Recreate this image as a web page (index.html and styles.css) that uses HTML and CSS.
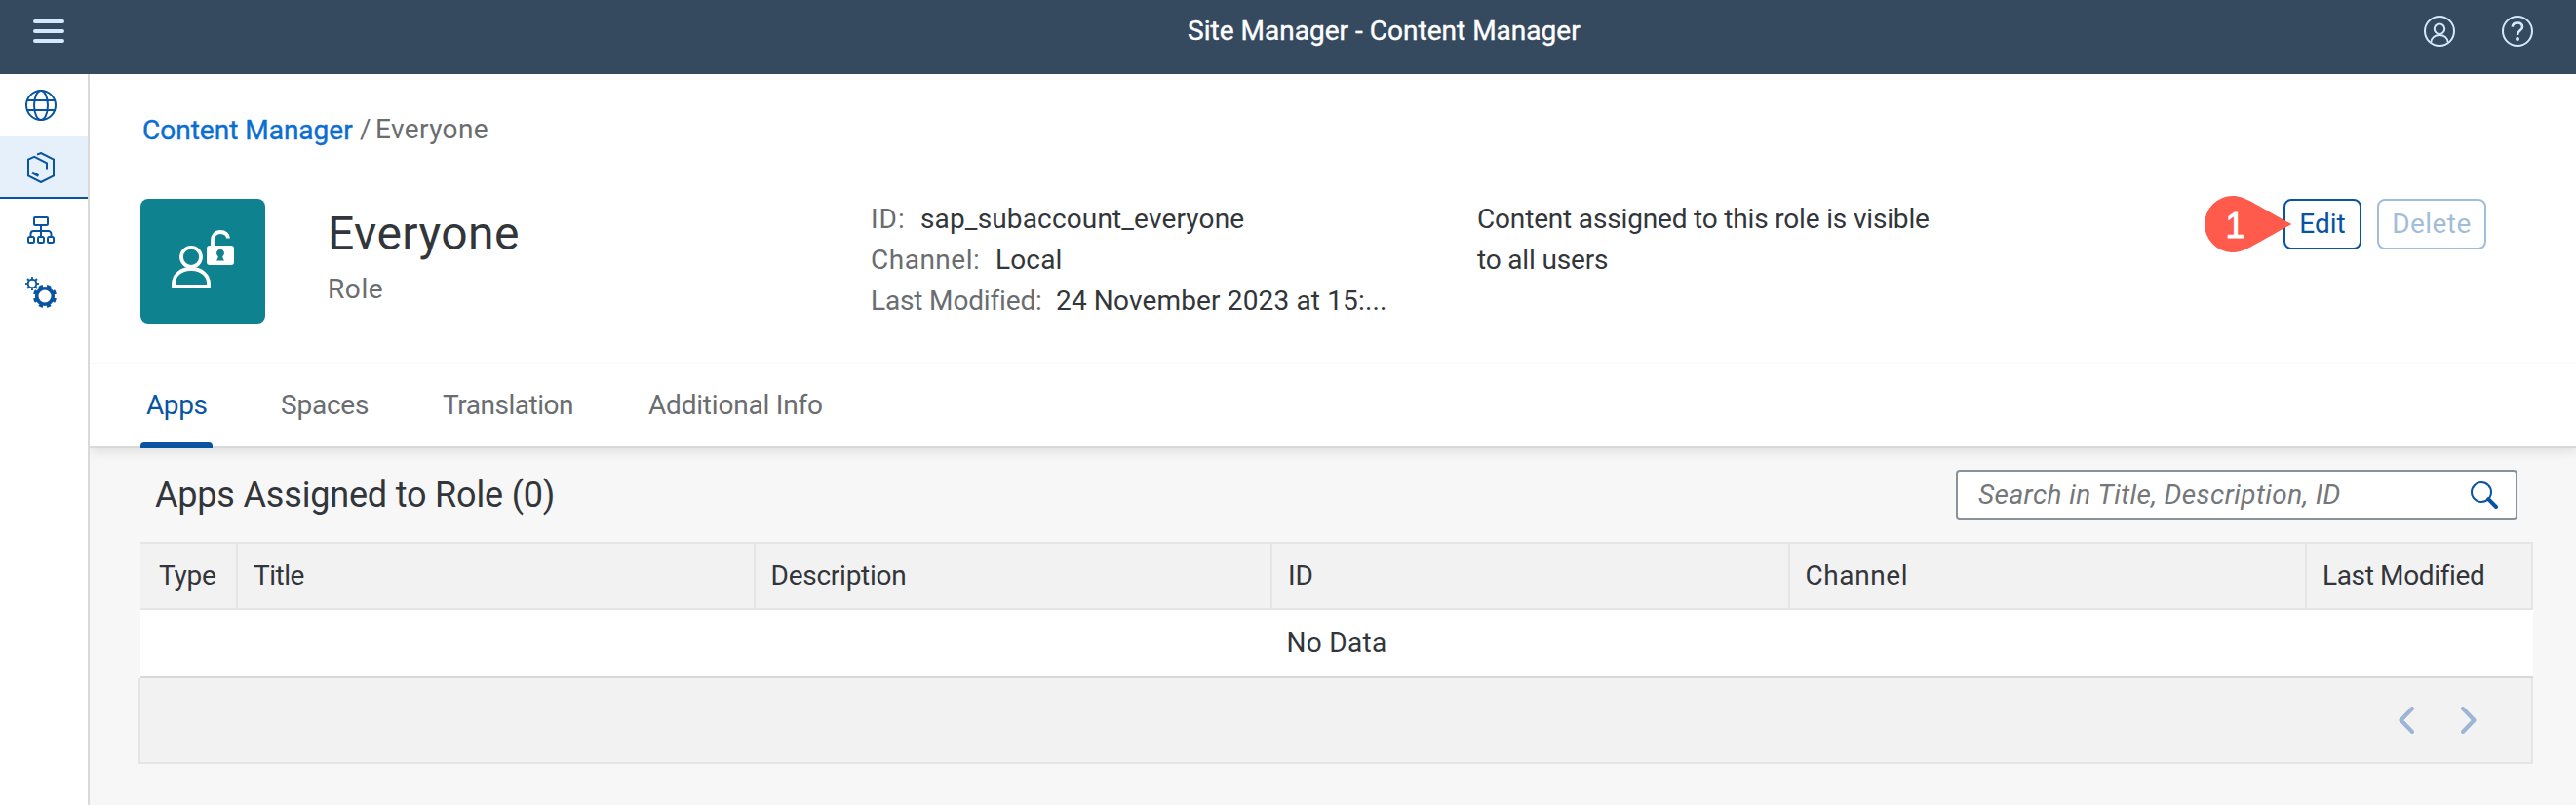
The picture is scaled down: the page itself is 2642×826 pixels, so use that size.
FILE: index.html
```
<!DOCTYPE html>
<html lang="en">
<head>
<meta charset="utf-8">
<title>Site Manager - Content Manager</title>
<link rel="stylesheet" href="styles.css">
</head>
<body>
<header class="shell">
  <svg class="shell-menu" width="32" height="24" viewBox="0 0 32 24"><path d="M2 2h28M2 12h28M2 22h28" fill="none" stroke="#d1e8ff" stroke-width="4" stroke-linecap="round"/></svg>
  <h1 class="shell-title">Site Manager - Content Manager</h1>
  <div class="shell-actions">
    <svg width="32" height="32" viewBox="0 0 32 32" fill="none" stroke="#d1e8ff" stroke-width="2"><circle cx="16" cy="16" r="15"/><circle cx="16" cy="13.7" r="5.2"/><path d="M7.3 27.5c.4-4.600 4-7.500 8.700-7.500s8.300 2.900 8.700 7.500"/></svg>
    <svg width="32" height="32" viewBox="0 0 32 32" fill="none" stroke="#d1e8ff" stroke-width="2"><circle cx="16" cy="16" r="15"/><path d="M10.800 11.600C11 8.800 13.200 7.500 16 7.500c3 0 5 1.600 5 4.200 0 3.800-5 3.600-5 8.300" stroke-width="2.600"/><circle cx="16" cy="24" r="2" fill="#d1e8ff" stroke="none"/></svg>
  </div>
</header>
<div class="app">
  <nav class="side">
    <a class="side-item"><svg width="32" height="32" viewBox="0 0 32 32" fill="none" stroke="#0854a0" stroke-width="2"><circle cx="16" cy="16" r="15"/><ellipse cx="16" cy="16" rx="7" ry="15"/><path d="M2 11h28M2 21h28"/></svg></a>
    <a class="side-item side-item-active"><svg width="32" height="32" viewBox="0 0 32 32" fill="none" stroke="#0854a0" stroke-width="2"><path d="M12 2.600L16 1l13 6.700v16.600L16 31 3 24.300V7.700L9.200 4.800 22 11.300v6.200"/><path d="M7 21l6.500 3.500" stroke-width="2.600"/></svg></a>
    <a class="side-item"><svg width="32" height="32" viewBox="0 0 32 32" fill="none" stroke="#0854a0" stroke-width="2"><rect x="9" y="3" width="14" height="8" rx="1"/><path d="M16 11v12M5.500 23v-3a3 3 0 0 1 3-3h15a3 3 0 0 1 3 3v3"/><rect x="3" y="23" width="6" height="6" rx="1.500"/><rect x="13" y="23" width="6" height="6" rx="1.500"/><rect x="23" y="23" width="6" height="6" rx="1.500"/></svg></a>
    <a class="side-item"><svg width="32" height="32" viewBox="0 0 32 32" fill="none" stroke="#0854a0"><circle cx="7" cy="7" r="4.300" stroke-width="1.900"/><circle cx="7" cy="7" r="5.900" stroke-width="2.200" pathLength="16" stroke-dasharray=".8 1.200" stroke-dashoffset=".4"/><circle cx="20" cy="20" r="8.300" stroke-width="3.600"/><circle cx="20" cy="20" r="10.700" stroke-width="2.800" pathLength="16" stroke-dasharray="1 1" stroke-dashoffset="-.5"/></svg></a>
  </nav>
  <main class="main">
    <section class="object">
      <div class="crumbs"><a class="crumb-link">Content Manager</a><span class="crumb-sep">/</span><span class="crumb-current">Everyone</span></div>
      <div class="object-row">
        <div class="avatar">
          <svg width="64" height="64" viewBox="0 0 64 64" fill="none" stroke="#fff" stroke-width="3.800"><ellipse cx="20" cy="27.800" rx="10" ry="10"/><path d="M2 58V55c0-8.400 7.500-15 17-15h2c9.500 0 17 6.600 17 15v3z"/><path d="M42 19v-8.500C42 6 45 2 50 2s8 3.200 8 6.500"/><rect x="36" y="16" width="28" height="20" rx="3" fill="#fff" stroke="none"/><path d="M50 19.800a4 4 0 0 1 2.400 7.200q-.5 1 1.600 4.500h-8q2.100-3.500 1.600-4.500A4 4 0 0 1 50 19.800z" fill="#0f828f" stroke="none"/></svg>
        </div>
        <div class="object-name">
          <h2 class="object-title">Everyone</h2>
          <p class="object-type">Role</p>
        </div>
        <dl class="facts">
          <div class="fact"><dt class="fact-id">ID:</dt><dd>sap_subaccount_everyone</dd></div>
          <div class="fact"><dt class="fact-channel">Channel:</dt><dd>Local</dd></div>
          <div class="fact"><dt class="fact-modified">Last Modified:</dt><dd>24 November 2023 at 15:...</dd></div>
        </dl>
        <p class="object-desc">Content assigned to this role is visible to all users</p>
        <div class="actions">
          <button class="btn btn-edit">Edit</button>
          <button class="btn btn-delete" disabled>Delete</button>
          <div class="pin">
            <svg width="90" height="58" viewBox="0 0 90 58"><path d="M29 0a29 29 0 1 0 0 58C42 58 52 49 89.500 29 52 9 42 0 29 0z" fill="#ff5b4c"/></svg>
            <span class="pin-number">1</span>
          </div>
        </div>
      </div>
    </section>
    <nav class="tabs">
      <a class="tab tab-apps tab-active">Apps</a>
      <a class="tab tab-spaces">Spaces</a>
      <a class="tab tab-translation">Translation</a>
      <a class="tab tab-info">Additional Info</a>
    </nav>
    <section class="content">
      <div class="toolbar">
        <h3 class="toolbar-title">Apps Assigned to Role (0)</h3>
        <div class="search">
          <span class="search-hint">Search in Title, Description, ID</span>
          <svg width="28" height="28" viewBox="0 0 28 28" fill="none" stroke="#0854a0"><circle cx="11" cy="11" r="10" stroke-width="2"/><path d="M18.200 18.200L26 26" stroke-width="4" stroke-linecap="round"/></svg>
        </div>
      </div>
      <div class="table-head">
        <div class="cell cell-type">Type</div>
        <div class="cell cell-title">Title</div>
        <div class="cell cell-desc">Description</div>
        <div class="cell">ID</div>
        <div class="cell cell-channel">Channel</div>
        <div class="cell cell-modified">Last Modified</div>
      </div>
      <div class="table-empty">No Data</div>
      <div class="table-foot">
        <svg width="16" height="28" viewBox="0 0 16 28"><path d="M14 2L2.500 14 14 26" fill="none" stroke="#9cb5d5" stroke-width="4" stroke-linecap="round" stroke-linejoin="round"/></svg>
        <svg width="16" height="28" viewBox="0 0 16 28"><path d="M2 2l11.500 12L2 26" fill="none" stroke="#9cb5d5" stroke-width="4" stroke-linecap="round" stroke-linejoin="round"/></svg>
      </div>
    </section>
  </main>
</div>
</body>
</html>
```
FILE: styles.css
```
* { box-sizing: border-box; }
body {
  margin: 0;
  height: 826px;
  display: flex;
  flex-direction: column;
  overflow: hidden;
  background: #fff;
  color: #32363a;
  font: 400 28px/34px Roboto, sans-serif;
}
h1, h2, h3, p, dl, dd { margin: 0; font-weight: 400; }
svg { display: block; flex: none; }

.shell {
  flex: none;
  height: 76px;
  padding: 0 44px 12px 34px;
  display: grid;
  grid-template-columns: 1184px auto 1fr;
  align-items: center;
  background: #354a5f;
}
.shell-title {
  font-size: 28px;
  line-height: 62px;
  letter-spacing: .02px;
  -webkit-text-stroke: .4px #fff;
  color: #fff;
}
.shell-actions { display: flex; gap: 48px; justify-content: flex-end; }

.app { flex: 1; display: flex; min-height: 0; }
.side { width: 92px; flex: none; border-right: 2px solid #d9d9d9; }
.side-item { display: flex; align-items: center; height: 64px; padding-left: 26px; }
.side-item-active {
  background: #e5f0fa;
  border-bottom: 2px solid #0854a0;
  padding-top: 2px;
}

.main { flex: 1; min-width: 0; display: flex; flex-direction: column; background: #f7f7f7; }
.object { height: 296px; flex: none; padding: 41px 92px 0 52px; background: #fff; }
.crumbs { display: flex; height: 34px; padding-left: 2px; color: #6a6d70; }
.crumb-link {
  width: 214px;
  white-space: nowrap;
  -webkit-text-stroke: .4px #0a6ed1;
  color: #0a6ed1;
}
.crumb-sep { margin: -1px 8px 0 9px; width: 8px; }
.crumb-current { margin-top: -1px; letter-spacing: .4px; }
.object-row {
  margin-top: 53px;
  display: grid;
  grid-template-columns: 192px 557px 622px 475px 1fr;
  align-items: start;
}
.avatar {
  width: 128px;
  height: 128px;
  display: flex;
  align-items: center;
  justify-content: center;
  border-radius: 8px;
  background: #0f828f;
}
.object-title { margin-top: 8px; font-size: 48px; line-height: 56px; letter-spacing: .43px; }
.object-type { margin-top: 12px; letter-spacing: .6px; color: #6a6d70; }
.fact { display: flex; line-height: 42px; }
.fact dt { color: #6a6d70; }
.fact dd { letter-spacing: .15px; white-space: nowrap; }
.fact-id { width: 51px; letter-spacing: 1px; }
.fact-channel { width: 128px; letter-spacing: .5px; }
.fact-modified { width: 190px; letter-spacing: -.15px; }
.object-desc { line-height: 42px; letter-spacing: -.17px; }
.actions { position: relative; display: flex; justify-content: flex-end; gap: 16px; }
.btn {
  height: 52px;
  padding: 0;
  border: 2px solid #0854a0;
  border-radius: 8px;
  background: #fff;
  color: #0854a0;
  font: inherit;
}
.btn-edit { width: 80px; }
.btn-delete { width: 112px; letter-spacing: .4px; opacity: .38; }
.pin { position: absolute; right: 199px; top: -3px; }
.pin-number {
  position: absolute;
  left: 0;
  top: 0;
  width: 63px;
  text-align: center;
  font: 36px/62px "Liberation Sans", sans-serif;
  -webkit-text-stroke: .8px #fff;
  color: #fff;
}

.tabs {
  position: relative;
  z-index: 1;
  flex: none;
  height: 88px;
  padding-left: 52px;
  display: flex;
  gap: 64px;
  background: #fff;
  border-top: 1px solid #fafafa;
  border-bottom: 2px solid #d9d9d9;
  box-shadow: 0 2px 12px rgba(0, 0, 0, .12);
  clip-path: inset(0 0 -20px 0);
}
.tab { padding: 0 6px; line-height: 85px; white-space: nowrap; color: #6a6d70; }
.tab-apps { width: 74px; letter-spacing: -.4px; }
.tab-spaces { width: 102px; letter-spacing: -.22px; }
.tab-translation { width: 147px; letter-spacing: -.47px; }
.tab-info { letter-spacing: -.2px; }
.tab-active { position: relative; color: #0854a0; }
.tab-active::after {
  content: "";
  position: absolute;
  left: 0;
  right: 0;
  bottom: -2px;
  height: 6px;
  border-radius: 4px 4px 0 0;
  background: #0854a0;
}

.content { padding: 0 44px 0 52px; }
.toolbar {
  height: 96px;
  padding: 0 16px 0 15px;
  display: flex;
  align-items: center;
  justify-content: space-between;
}
.toolbar-title { font-size: 36px; line-height: 44px; letter-spacing: -.18px; }
.search {
  width: 576px;
  height: 52px;
  padding: 0 18px 0 21px;
  display: flex;
  align-items: center;
  justify-content: space-between;
  border: 2px solid #89919a;
  border-radius: 4px;
  background: #fff;
}
.search-hint { font-style: italic; letter-spacing: .43px; color: #74777a; }
.table-head {
  height: 70px;
  display: grid;
  grid-template-columns: 100px repeat(4, 1fr) 232px;
  border: solid #e5e5e5;
  border-width: 2px 0;
  background: #f2f2f2;
}
.cell { padding-left: 16px; line-height: 66px; border-right: 2px solid #e5e5e5; }
.cell-type { padding-left: 19px; letter-spacing: -.23px; }
.cell-title { letter-spacing: -.5px; }
.cell-desc { letter-spacing: -.25px; }
.cell-channel { letter-spacing: .6px; }
.cell-modified { letter-spacing: -.35px; }
.table-empty {
  height: 70px;
  line-height: 68px;
  text-align: center;
  letter-spacing: .3px;
  background: #fff;
  border-bottom: 2px solid #d9d9d9;
}
.table-foot {
  height: 88px;
  margin-left: -2px;
  padding-right: 56px;
  display: flex;
  align-items: center;
  justify-content: flex-end;
  gap: 48px;
  background: #f2f2f2;
  border: 2px solid #e5e5e5;
  border-top: 0;
}
```
